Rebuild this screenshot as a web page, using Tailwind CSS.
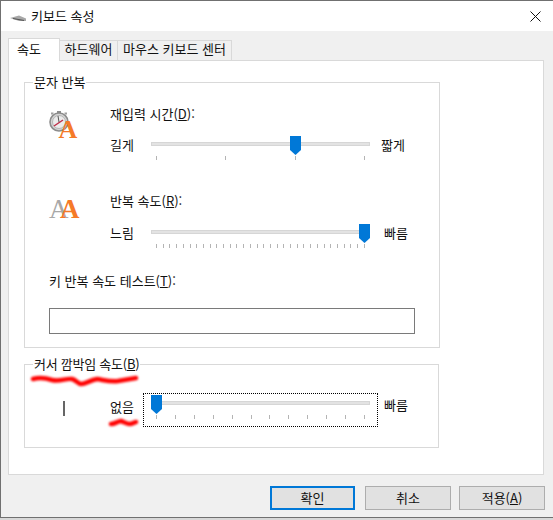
<!DOCTYPE html>
<html lang="ko">
<head>
  <meta charset="UTF-8" />
  <title>키보드 속성</title>
  <script src="https://cdn.jsdelivr.net/npm/@tailwindcss/browser@4"></script>
</head>
<body class="bg-[#d8d8d8] overflow-hidden font-['Noto_Sans_CJK_KR','Noto_Sans',sans-serif] text-[13px] leading-[16px] text-[#111]">
  <div class="relative w-[553px] h-[520px]">
    <!-- window -->
    <div class="w-[553px] h-[518px] bg-[#f0f0f0] border-t border-l border-b border-[#707070] flex flex-col">
      <!-- title bar -->
      <div class="h-[30px] bg-white flex items-center shrink-0">
        <svg class="ml-[9px] w-[17px] h-[10px] mt-[5px]" viewBox="0 0 17 10">
          <path d="M0 4 L9 1.5 L16 4.5 L16 7 L9 7 Z" fill="#a8a8a8"/>
          <path d="M3 4.5 L14 6.5" stroke="#555" stroke-width="1.2"/>
        </svg>
        <span class="ml-[4px]">키보드 속성</span>
        <svg class="ml-auto mr-[12px] w-[11px] h-[11px]" viewBox="0 0 11 11">
          <path d="M0.5 0.5 L10.5 10.5 M10.5 0.5 L0.5 10.5" stroke="#111" stroke-width="1"/>
        </svg>
      </div>

      <!-- tabs -->
      <div class="flex items-end ml-[7px] mt-[8px] h-[22px] relative z-10 -mb-px">
        <div class="w-[52px] h-[23px] bg-white border border-b-0 border-[#d9d9d9] pl-[8px] pt-[2px]">속도</div>
        <div class="w-[58px] h-[21px] border-y border-r border-[#d9d9d9] bg-[#f0f0f0] text-center">하드웨어</div>
        <div class="w-[114px] h-[21px] border-y border-r border-[#d9d9d9] bg-[#f0f0f0] text-center">마우스 키보드 센터</div>
      </div>

      <!-- panel -->
      <div class="ml-[7px] w-[536px] h-[415px] bg-white border border-[#d9d9d9] px-[15px]">
        <fieldset class="mt-[12px] w-[415px] h-[275px] border border-[#d9d9d9]">
          <legend class="ml-[8px] px-[1px] leading-[18px]">문자 반복</legend>

          <!-- repeat delay -->
          <div class="flex h-[101px] pt-[15px]">
            <div class="w-[85px] shrink-0 pl-[24px]">
              <svg class="w-[32px] h-[32px] overflow-visible" viewBox="0 0 32 32">
                <circle cx="10" cy="16" r="9" fill="#d4d4d4" stroke="#8c8c8c" stroke-width="1.6"/>
                <circle cx="10" cy="16" r="6.5" fill="#ececec" stroke="#b5b5b5" stroke-width="1"/>
                <rect x="8" y="5" width="4" height="2" fill="#8c8c8c"/>
                <rect x="2" y="6.5" width="2.5" height="2" fill="#a0a0a0"/>
                <rect x="15.5" y="6.5" width="2.5" height="2" fill="#a0a0a0"/>
                <path d="M5 20 L14 14" stroke="#c0304a" stroke-width="1.5"/>
                <path d="M10 16 L9 10" stroke="#555" stroke-width="1"/>
                <text x="9.5" y="32" font-family="Liberation Serif" font-weight="700" font-size="26" fill="#f57a28">A</text>
              </svg>
            </div>
            <div>
              <div>재입력 시간(<u>D</u>):</div>
              <div class="flex mt-[14px]">
                <span class="w-[41px] pt-[1px]">길게</span>
                <div class="relative w-[219px] h-[24px]">
                  <div class="h-[4px] bg-[#e3e3e3] border border-[#d6d6d6] relative top-[6px]"></div>
                  <div class="flex justify-between px-[5px] mt-[16px]">
                    <i class="w-px h-[4px] bg-[#b4b4b4]"></i><i class="w-px h-[4px] bg-[#b4b4b4]"></i><i class="w-px h-[4px] bg-[#b4b4b4]"></i><i class="w-px h-[4px] bg-[#b4b4b4]"></i>
                  </div>
                  <svg class="absolute top-0 left-[139px] w-[11px] h-[19px]" viewBox="0 0 11 19"><polygon points="0,0 11,0 11,14 5.5,19 0,14" fill="#0078d7"/></svg>
                </div>
                <span class="ml-[11px] pt-[1px]">짧게</span>
              </div>
            </div>
          </div>

          <!-- repeat rate -->
          <div class="flex h-[78px] pt-[1px]">
            <div class="w-[85px] shrink-0 pl-[24px]">
              <svg class="w-[34px] h-[24px] overflow-visible" viewBox="0 0 34 24">
                <text x="0" y="25" font-family="Liberation Serif" font-weight="400" font-size="27" fill="#a8a8a8">A</text>
                <text x="11" y="25" font-family="Liberation Serif" font-weight="700" font-size="27" fill="#f57a28">A</text>
              </svg>
            </div>
            <div>
              <div>반복 속도(<u>R</u>):</div>
              <div class="flex mt-[15px]">
                <span class="w-[41px] pt-[1px]">느림</span>
                <div class="relative w-[219px] h-[24px]">
                  <div class="h-[4px] bg-[#e3e3e3] border border-[#d6d6d6] relative top-[6px]"></div>
                  <div id="rate-ticks" class="flex justify-between px-[5px] mt-[16px]"></div>
                  <svg class="absolute top-0 left-[208px] w-[11px] h-[19px]" viewBox="0 0 11 19"><polygon points="0,0 11,0 11,14 5.5,19 0,14" fill="#0078d7"/></svg>
                </div>
                <span class="ml-[14px] pt-[1px]">빠름</span>
              </div>
            </div>
          </div>

          <!-- test box -->
          <div class="px-[24px] pt-[3px]">
            <div>키 반복 속도 테스트(<u>T</u>):</div>
            <div class="mt-[19px] w-[366px] h-[26px] border border-[#7a7a7a] bg-white"></div>
          </div>
        </fieldset>

        <fieldset class="mt-[7px] w-[415px] h-[93px] border border-[#d9d9d9]">
          <legend class="ml-[8px] px-[1px] leading-[18px] tracking-[-0.25px]">커서 깜박임 속도(<u>B</u>)</legend>
          <div class="flex pt-[20px]">
            <div class="w-[38px] ml-[38px] shrink-0 pt-[8px]">
              <div class="w-[2px] h-[15px] bg-[#666]"></div>
            </div>
            <span class="w-[33px] ml-[9px] pt-[6px]">없음</span>
            <div class="w-[235px] h-[34px] border border-dotted border-black px-[7px] pt-[1px]">
              <div class="relative w-[219px] h-[30px]">
                <div class="h-[4px] bg-[#e3e3e3] border border-[#d6d6d6] relative top-[6px]"></div>
                <div id="blink-ticks" class="flex justify-between px-[5px] mt-[16px]"></div>
                <svg class="absolute top-0 left-0 w-[11px] h-[19px]" viewBox="0 0 11 19"><polygon points="0,0 11,0 11,14 5.5,19 0,14" fill="#0078d7"/></svg>
              </div>
            </div>
            <span class="ml-[6px] pt-[4px]">빠름</span>
          </div>
        </fieldset>
      </div>

      <!-- buttons -->
      <div class="flex ml-[269px] mt-[11px]">
        <button class="w-[85px] h-[24px] bg-[#e1e1e1] border-2 border-[#0078d7]">확인</button>
        <button class="ml-[10px] w-[86px] h-[24px] bg-[#e1e1e1] border border-[#adadad]">취소</button>
        <button class="ml-[8px] w-[86px] h-[24px] bg-[#e1e1e1] border border-[#adadad]">적용(<u>A</u>)</button>
      </div>
    </div>

    <!-- red marks drawn on top of the screenshot -->
    <svg class="absolute top-0 left-0 w-[553px] h-[520px] pointer-events-none blur-[0.8px]" viewBox="0 0 553 520" fill="none">
      <path d="M33 379 C40 377 46 378 52 380 C60 382 66 378 72 379 C76 380 78 384 81 384 C86 384 90 380 97 379 C104 380 110 382 118 381 C124 380 130 379 136 378" stroke="#ff0000" stroke-width="4.5" stroke-linecap="round"/>
      <path d="M111 424 C115 424 118 421 121 421 C124 422 127 424 130 424 C133 424 135 422 136 422" stroke="#ff0000" stroke-width="4.5" stroke-linecap="round"/>
    </svg>
  </div>

  <script>
    // tick marks of the two sliders
    function addTicks(id, count) {
      const box = document.getElementById(id);
      for (let i = 0; i < count; i++) {
        const t = document.createElement("i");
        t.className = "w-px h-[4px] bg-[#b4b4b4]";
        box.appendChild(t);
      }
    }
    addTicks("rate-ticks", 32);
    addTicks("blink-ticks", 12);
  </script>
</body>
</html>
